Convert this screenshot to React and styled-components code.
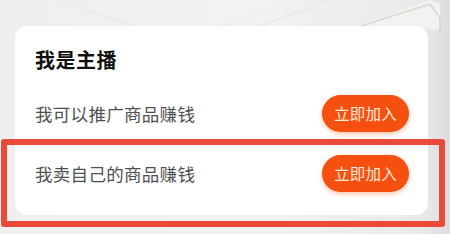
import styled, { createGlobalStyle } from "styled-components";

const GlobalStyle = createGlobalStyle`
  html, body {
    margin: 0;
    padding: 0;
  }
  body {
    font-family: "Noto Sans CJK SC", "Noto Sans", sans-serif;
  }
`;

const rows = [
  { label: "我可以推广商品赚钱", action: "立即加入" },
  { label: "我卖自己的商品赚钱", action: "立即加入" },
];

const App = () => {
  return (
    <>
      <GlobalStyle />
      <Page>
        <Backdrop viewBox="0 0 450 234" preserveAspectRatio="none">
          <path d="M60 0 L230 60" stroke="#e6e6e6" strokeWidth="1" fill="none" />
          <path d="M180 40 L300 0" stroke="#e9e9e9" strokeWidth="1" fill="none" />
          <path d="M250 30 L330 0" stroke="#e4e4e4" strokeWidth="1" fill="none" />
          <path d="M355 28 L430 0 L440 4 L440 30 L380 26 Z" fill="#f4f2f0" />
          <path d="M355 28 L430 4" stroke="#dcd6d0" strokeWidth="1.5" fill="none" />
          <path d="M430 4 L440 18 L440 32" stroke="#d8d2cc" strokeWidth="1.5" fill="none" />
        </Backdrop>
        <Card>
          <Title>我是主播</Title>
          {rows.map(({ label, action }) => (
            <Row key={label}>
              <RowLabel>{label}</RowLabel>
              <JoinButton>{action}</JoinButton>
            </Row>
          ))}
        </Card>
        <Highlight />
      </Page>
    </>
  );
};

const Page = styled.div`
  position: relative;
  width: 450px;
  height: 234px;
  overflow: hidden;
  box-sizing: border-box;
  padding: 26px 0 0 15px;
  background: linear-gradient(90deg, #efefef 0%, #f2f2f2 60%, #e9e9e9 94%, #dcdcdc 100%);
`;

const Backdrop = styled.svg`
  position: absolute;
  inset: 0;
  width: 100%;
  height: 100%;
`;

const Card = styled.div`
  position: relative;
  width: 413px;
  height: 189px;
  box-sizing: border-box;
  padding: 22px 19px 11px 20px;
  background: #ffffff;
  border-radius: 12px;
  display: flex;
  flex-direction: column;
`;

const Title = styled.div`
  font-size: 20px;
  line-height: 24px;
  font-weight: 700;
  color: #111111;
  letter-spacing: 0.5px;
  margin-bottom: 11px;
`;

const Row = styled.div`
  height: 60px;
  display: flex;
  align-items: center;
  justify-content: space-between;
`;

const RowLabel = styled.span`
  font-size: 17.5px;
  color: #505050;
  letter-spacing: 0.3px;
`;

const JoinButton = styled.button`
  width: 87px;
  height: 37px;
  border: none;
  border-radius: 19px;
  background: #f5500f;
  color: #ffeadc;
  font-family: inherit;
  font-size: 15.5px;
  letter-spacing: 0.2px;
  box-shadow: 0 2px 5px rgba(245, 80, 15, 0.35);
  padding: 0;
`;

const Highlight = styled.div`
  position: absolute;
  left: 1px;
  top: 139px;
  width: 444px;
  height: 88px;
  box-sizing: border-box;
  border: 6px solid #ea4a3a;
  border-radius: 3px;
  pointer-events: none;
`;

export default App;
